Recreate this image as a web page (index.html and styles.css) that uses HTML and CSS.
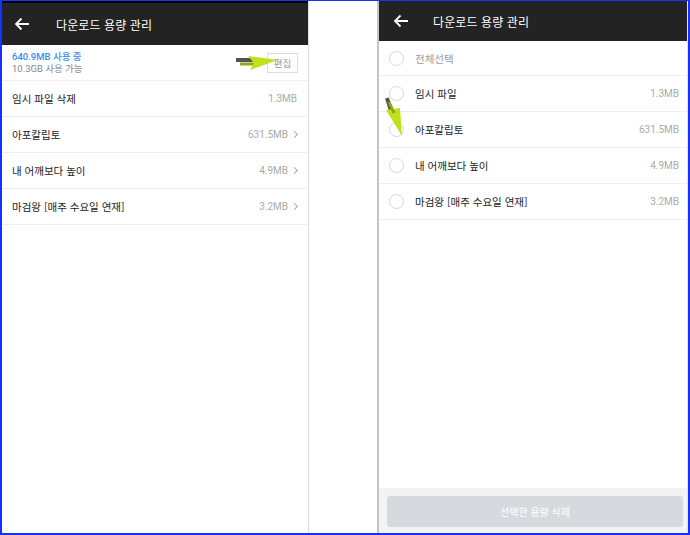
FILE: index.html
```html
<!DOCTYPE html>
<html lang="ko">
<head>
<meta charset="utf-8">
<link rel="stylesheet" href="styles.css">
</head>
<body>
<div class="frame">
  <section class="panel left">
    <header class="bar bar-left">
      <svg class="back" width="16" height="14" viewBox="0 0 16 14"><path d="M15 7H2M7.5 1.5L2 7l5.5 5.5" fill="none" stroke="#fff" stroke-width="1.8"/></svg>
      <span class="title">다운로드 용량 관리</span>
    </header>
    <div class="usage">
      <div class="usage-text">
        <div class="used">640.9MB 사용 중</div>
        <div class="avail">10.3GB 사용 가능</div>
      </div>
      <button class="edit">편집</button>
    </div>
    <ul class="list">
      <li class="row"><span class="name">임시 파일 삭제</span><span class="size">1.3MB</span></li>
      <li class="row"><span class="name">아포칼립토</span><span class="size">631.5MB<i class="chev"></i></span></li>
      <li class="row"><span class="name">내 어깨보다 높이</span><span class="size">4.9MB<i class="chev"></i></span></li>
      <li class="row"><span class="name">마검왕 [매주 수요일 연재]</span><span class="size">3.2MB<i class="chev"></i></span></li>
    </ul>
    <svg class="anno anno-left" width="46" height="18" viewBox="0 0 46 18">
      <path d="M2 6 L26 6" stroke="#2a2a2a" stroke-width="4" opacity="0.8"/>
      <path d="M6 10 L22 10" stroke="#8aa818" stroke-width="3"/>
      <polygon points="14,2 44,6 16,16 20,9" fill="#bde21a"/>
    </svg>
  </section>
  <div class="gap"></div>
  <section class="panel right">
    <header class="bar bar-right">
      <svg class="back" width="16" height="14" viewBox="0 0 16 14"><path d="M15 7H2M7.5 1.5L2 7l5.5 5.5" fill="none" stroke="#fff" stroke-width="1.8"/></svg>
      <span class="title">다운로드 용량 관리</span>
    </header>
    <ul class="list sel">
      <li class="row all"><span class="radio"></span><span class="name">전체선택</span></li>
      <li class="row"><span class="radio"></span><span class="name">임시 파일</span><span class="size">1.3MB</span></li>
      <li class="row"><span class="radio"></span><span class="name">아포칼립토</span><span class="size">631.5MB</span></li>
      <li class="row"><span class="radio"></span><span class="name">내 어깨보다 높이</span><span class="size">4.9MB</span></li>
      <li class="row"><span class="radio"></span><span class="name">마검왕 [매주 수요일 연재]</span><span class="size">3.2MB</span></li>
    </ul>
    <div class="spacer"></div>
    <footer class="foot"><button class="del">선택한 용량 삭제</button></footer>
    <svg class="anno anno-right" width="24" height="42" viewBox="0 0 24 42">
      <path d="M3 2 L8 18" stroke="#2a2a2a" stroke-width="4" opacity="0.8"/>
      <polygon points="2,14 16,12 18,40" fill="#bde21a"/>
      <path d="M5 6 L10 17" stroke="#8aa818" stroke-width="3"/>
    </svg>
  </section>
</div>
</body>
</html>
```
FILE: styles.css
```css
* { box-sizing: border-box; margin: 0; padding: 0; }
html, body { width: 690px; height: 535px; overflow: hidden; background: #fff; }
body { font-family: Roboto, "Noto Sans CJK KR", sans-serif; }
.frame {
  width: 690px; height: 535px;
  border: 2px solid #1530ff; border-top-width: 1px;
  display: flex; background: #fff;
}
.panel { position: relative; display: flex; flex-direction: column; height: 100%; }
.left { width: 307px; border-right: 1px solid #dcdcdc; }
.gap { width: 68px; }
.right { flex: 1; border-left: 2px solid #c4c4c4; border-right: 1px solid #e4e4e4; }
.bar { background: #232323; display: flex; align-items: center; color: #fff; }
.bar-left { height: 44px; border-top: 2px solid #000; padding-left: 12px; }
.bar-right { height: 40px; padding-left: 14px; }
.back { flex: none; }
.title { font-family: "Noto Sans CJK KR", sans-serif; font-size: 12px; margin-left: 26px; letter-spacing: 0.1px; }
.bar-right .title { margin-left: 24px; }
.usage { height: 36px; display: flex; align-items: center; justify-content: space-between; padding: 0 10px 0 10px; border-bottom: 1px solid #f0f0f0; }
.usage-text { font-size: 9.5px; line-height: 12px; }
.used { color: #3a8ae8; font-weight: 500; }
.avail { color: #888; }
.edit { font-family: "Noto Sans CJK KR", sans-serif; font-size: 9.5px; color: #999; background: #fff; border: 1px solid #ddd; width: 31px; height: 20px; margin-top: 1px; }
.list { list-style: none; }
.row { height: 36px; display: flex; align-items: center; padding: 0 11px 0 10px; border-bottom: 1px solid #efefef; font-size: 10.5px; }
.name { font-family: "Noto Sans CJK KR", sans-serif; color: #222; flex: 1; }
.size { color: #aaa; font-size: 10px; display: flex; align-items: center; }
.chev { display: inline-block; width: 5px; height: 5px; border-right: 1px solid #aaa; border-top: 1px solid #aaa; transform: rotate(45deg); margin-left: 4px; }
.sel .row { padding: 0 8px 0 10px; }
.sel .row.all { height: 35px; }
.sel .row.all .name { color: #9a9a9a; }
.radio { width: 15px; height: 15px; border: 1px solid #d6d6d6; border-radius: 50%; margin-right: 11px; flex: none; }
.spacer { flex: 1; }
.foot { background: #f3f3f3; height: 45px; padding: 8px 4px 5px 8px; }
.del { width: 100%; height: 31px; border: none; border-radius: 3px; background: #d6d9dd; color: #fff; font-family: "Noto Sans CJK KR", sans-serif; font-size: 10px; }
.anno { position: absolute; }
.anno-left { left: 232px; top: 53px; }
.anno-right { left: 5px; top: 95px; }
```
